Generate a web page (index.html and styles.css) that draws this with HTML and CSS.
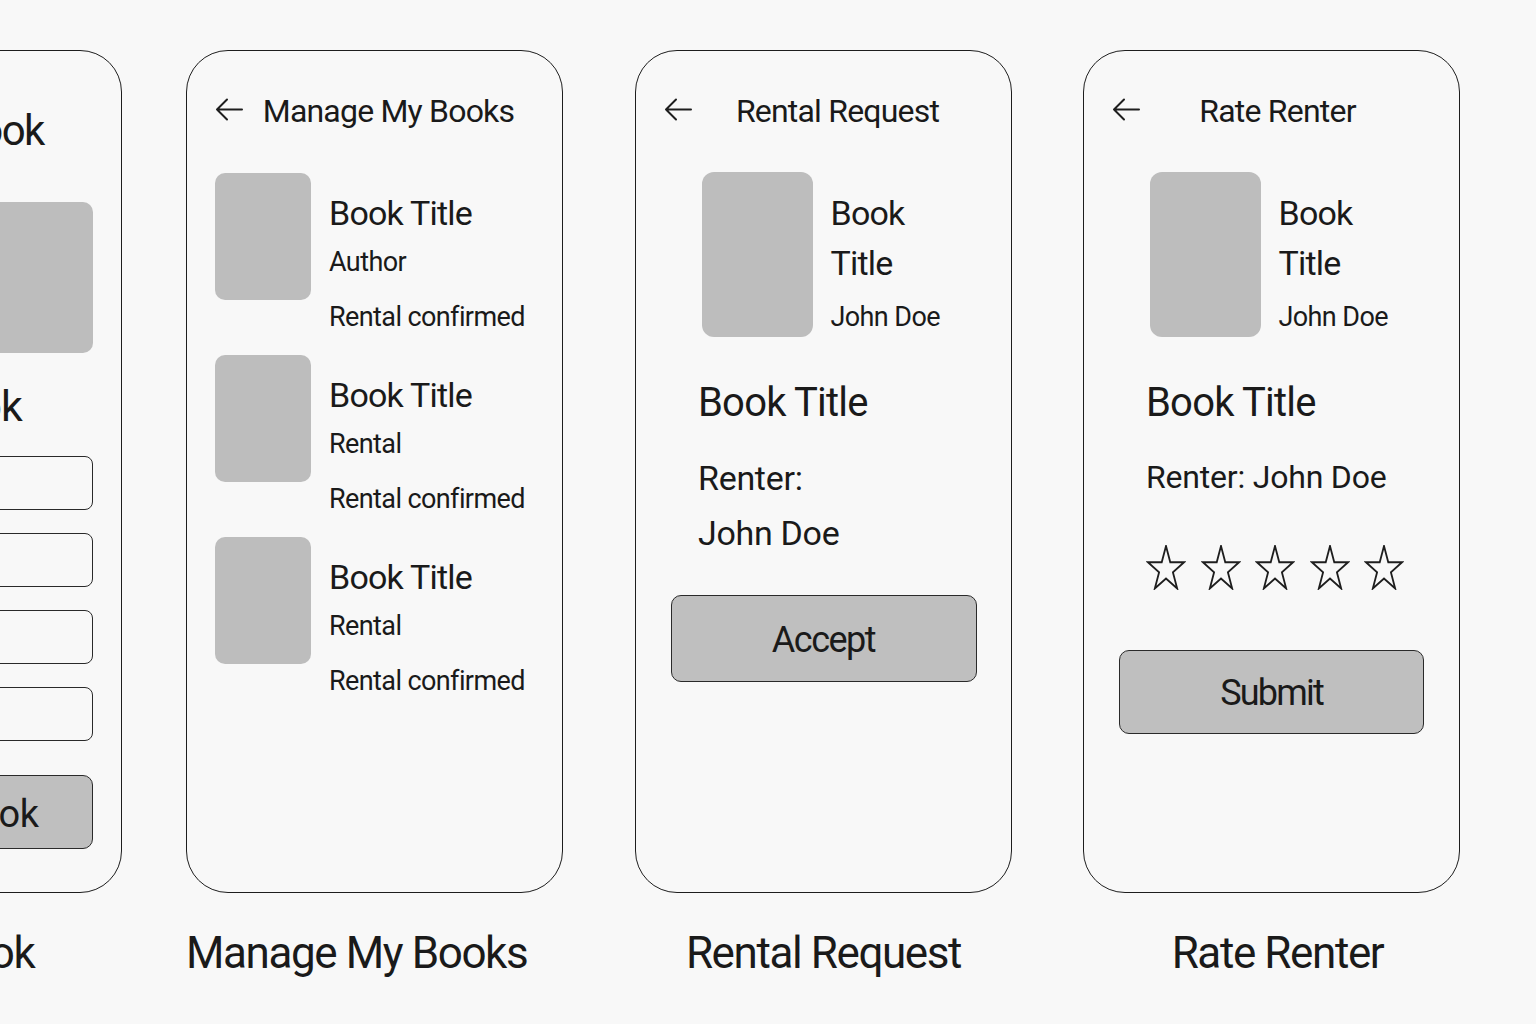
FILE: index.html
```html
<!DOCTYPE html>
<html lang="en">
<head>
<meta charset="utf-8">
<title>Book Rental Screens</title>
<link rel="stylesheet" href="styles.css">
</head>
<body>
<div class="board">

  <section class="screen screen--cut">
    <div class="phone">
      <h1 class="add-title">List a Book</h1>
      <div class="photo-box"></div>
      <div class="field-label">Add Book</div>
      <div class="field field--first"></div>
      <div class="field"></div>
      <div class="field"></div>
      <div class="field"></div>
      <div class="btn btn--add">Submit Book</div>
    </div>
    <div class="caption">List a Book</div>
  </section>

  <section class="screen">
    <div class="phone">
      <header class="topbar">
        <svg class="back" viewBox="0 0 28 24"><path d="M27 12H2M12 2L2 12l10 10"/></svg>
        <h2 class="topbar-title">Manage My Books</h2>
      </header>
      <ul class="book-list">
        <li class="book-item">
          <div class="thumb"></div>
          <div class="book-info">
            <div class="book-title">Book Title</div>
            <div class="book-sub">Author</div>
            <div class="book-status">Rental confirmed</div>
          </div>
        </li>
        <li class="book-item">
          <div class="thumb"></div>
          <div class="book-info">
            <div class="book-title">Book Title</div>
            <div class="book-sub">Rental</div>
            <div class="book-status">Rental confirmed</div>
          </div>
        </li>
        <li class="book-item">
          <div class="thumb"></div>
          <div class="book-info">
            <div class="book-title">Book Title</div>
            <div class="book-sub">Rental</div>
            <div class="book-status">Rental confirmed</div>
          </div>
        </li>
      </ul>
    </div>
    <div class="caption caption--left">Manage My Books</div>
  </section>

  <section class="screen">
    <div class="phone">
      <header class="topbar">
        <svg class="back" viewBox="0 0 28 24"><path d="M27 12H2M12 2L2 12l10 10"/></svg>
        <h2 class="topbar-title">Rental Request</h2>
      </header>
      <div class="feature">
        <div class="cover"></div>
        <div class="feature-info">
          <div class="feature-title">Book Title</div>
          <div class="feature-name">John Doe</div>
        </div>
      </div>
      <div class="details">
        <div class="detail-title">Book Title</div>
        <div class="renter-line renter-line--first">Renter:</div>
        <div class="renter-line">John Doe</div>
      </div>
      <div class="btn btn--accept">Accept</div>
    </div>
    <div class="caption">Rental Request</div>
  </section>

  <section class="screen screen--last">
    <div class="phone">
      <header class="topbar">
        <svg class="back" viewBox="0 0 28 24"><path d="M27 12H2M12 2L2 12l10 10"/></svg>
        <h2 class="topbar-title topbar-title--shift">Rate Renter</h2>
      </header>
      <div class="feature">
        <div class="cover"></div>
        <div class="feature-info">
          <div class="feature-title">Book Title</div>
          <div class="feature-name">John Doe</div>
        </div>
      </div>
      <div class="details">
        <div class="detail-title">Book Title</div>
        <div class="renter-inline">Renter: John Doe</div>
        <div class="stars">
          <svg class="star" viewBox="0 0 40 45"><polygon points="20,1 24.27,17.24 38.07,17.24 26.9,27.27 31.17,43.51 20,33.48 8.83,43.51 13.1,27.27 1.93,17.24 15.73,17.24"/></svg>
          <svg class="star" viewBox="0 0 40 45"><polygon points="20,1 24.27,17.24 38.07,17.24 26.9,27.27 31.17,43.51 20,33.48 8.83,43.51 13.1,27.27 1.93,17.24 15.73,17.24"/></svg>
          <svg class="star" viewBox="0 0 40 45"><polygon points="20,1 24.27,17.24 38.07,17.24 26.9,27.27 31.17,43.51 20,33.48 8.83,43.51 13.1,27.27 1.93,17.24 15.73,17.24"/></svg>
          <svg class="star" viewBox="0 0 40 45"><polygon points="20,1 24.27,17.24 38.07,17.24 26.9,27.27 31.17,43.51 20,33.48 8.83,43.51 13.1,27.27 1.93,17.24 15.73,17.24"/></svg>
          <svg class="star" viewBox="0 0 40 45"><polygon points="20,1 24.27,17.24 38.07,17.24 26.9,27.27 31.17,43.51 20,33.48 8.83,43.51 13.1,27.27 1.93,17.24 15.73,17.24"/></svg>
        </div>
      </div>
      <div class="btn btn--submit">Submit</div>
    </div>
    <div class="caption caption--shift">Rate Renter</div>
  </section>

</div>
</body>
</html>
```

FILE: styles.css
```css
* {
  box-sizing: border-box;
  margin: 0;
  padding: 0;
}

html,
body {
  background: #f8f8f8;
}

body {
  width: 1536px;
  height: 1024px;
  overflow: hidden;
  font-family: Roboto, "Liberation Sans", sans-serif;
  color: #1a1a1a;
}

.board {
  display: flex;
  gap: 72px;
  padding-top: 50px;
  margin-left: -255px;
}

.screen {
  width: 377px;
  flex: none;
  display: flex;
  flex-direction: column;
}

.screen--cut {
  margin-right: -8px;
}

.screen--last {
  margin-left: -1px;
}

.phone {
  height: 843px;
  border: 1.5px solid #1e1e1e;
  border-radius: 42px;
  padding: 40px 28px 0;
  display: flex;
  flex-direction: column;
}

.caption {
  margin-top: 34px;
  font-size: 44px;
  line-height: 52px;
  letter-spacing: -1.4px;
  text-align: center;
}

.caption--left {
  text-align: left;
}

.caption--shift {
  padding-left: 12px;
}

/* ---------- top bar ---------- */
.topbar {
  display: flex;
  align-items: center;
  height: 40px;
}

.back {
  width: 28px;
  height: 25px;
  flex: none;
  margin-top: -3px;
  fill: none;
  stroke: #1e1e1e;
  stroke-width: 2;
  stroke-linecap: round;
  stroke-linejoin: round;
}

.topbar-title {
  flex: 1;
  text-align: center;
  font-size: 32px;
  line-height: 40px;
  font-weight: 400;
  letter-spacing: -0.8px;
  white-space: nowrap;
}

.topbar-title--shift {
  padding-right: 16px;
}

/* ---------- list a book (cut off) ---------- */
.add-title {
  margin-top: 14px;
  padding-left: 30px;
  font-size: 42px;
  line-height: 52px;
  font-weight: 400;
  letter-spacing: -1.5px;
  text-align: center;
  white-space: nowrap;
}

.photo-box {
  margin-top: 45px;
  height: 151px;
  border-radius: 10px;
  background: #bdbdbd;
}

.field-label {
  margin-top: 28px;
  font-size: 43px;
  line-height: 50px;
  letter-spacing: -1px;
  text-align: center;
}

.field {
  margin-top: 23px;
  height: 54px;
  border: 1.5px solid #2a2a2a;
  border-radius: 8px;
}

.field--first {
  margin-top: 25px;
}

/* ---------- buttons ---------- */
.btn {
  display: flex;
  align-items: center;
  justify-content: center;
  background: #bfbfbf;
  border: 1.5px solid #2a2a2a;
  border-radius: 10px;
  font-size: 36px;
  line-height: 36px;
  letter-spacing: -1.5px;
  padding-top: 3px;
}

.btn--add {
  margin-top: 34px;
  height: 74px;
  font-size: 38px;
  letter-spacing: -0.5px;
}

.btn--accept {
  width: 306px;
  height: 87px;
  margin: 34px auto 0;
}

.btn--submit {
  width: 305px;
  height: 84px;
  margin: 60px auto 0;
  letter-spacing: -1.8px;
}

/* ---------- manage my books ---------- */
.book-list {
  list-style: none;
  margin-top: 41.5px;
  display: flex;
  flex-direction: column;
  gap: 21px;
}

.book-item {
  display: flex;
  gap: 18px;
}

.thumb {
  flex: none;
  width: 96px;
  height: 127px;
  border-radius: 10px;
  background: #bdbdbd;
}

.book-info {
  padding-top: 20px;
  white-space: nowrap;
}

.book-title {
  font-size: 34px;
  line-height: 40px;
  letter-spacing: -0.8px;
}

.book-sub,
.book-status {
  font-size: 27px;
  line-height: 34px;
  letter-spacing: -0.6px;
}

.book-sub {
  margin-top: 12px;
}

.book-status {
  margin-top: 21px;
}

/* ---------- detail screens ---------- */
.feature {
  display: flex;
  justify-content: center;
  gap: 18px;
  margin-top: 40.5px;
}

.cover {
  flex: none;
  width: 111px;
  height: 165px;
  border-radius: 12px;
  background: #bdbdbd;
}

.feature-info {
  width: 115px;
  padding-top: 16px;
}

.feature-title {
  font-size: 34px;
  line-height: 50px;
  letter-spacing: -0.8px;
}

.feature-name {
  margin-top: 12px;
  font-size: 27px;
  line-height: 34px;
  letter-spacing: -0.6px;
  white-space: nowrap;
}

.details {
  padding-left: 34px;
}

.detail-title {
  margin-top: 42px;
  font-size: 40px;
  line-height: 48px;
  letter-spacing: -0.8px;
}

.renter-line {
  font-size: 34px;
  line-height: 55px;
  letter-spacing: -0.3px;
}

.renter-line--first {
  margin-top: 24px;
}

.renter-inline {
  margin-top: 30px;
  font-size: 32px;
  line-height: 40px;
  letter-spacing: -0.2px;
}

.stars {
  display: flex;
  gap: 14.6px;
  margin-top: 48px;
}

.star {
  width: 40px;
  height: 45px;
  fill: none;
  stroke: #1e1e1e;
  stroke-width: 1.8;
  stroke-linejoin: miter;
}
```
